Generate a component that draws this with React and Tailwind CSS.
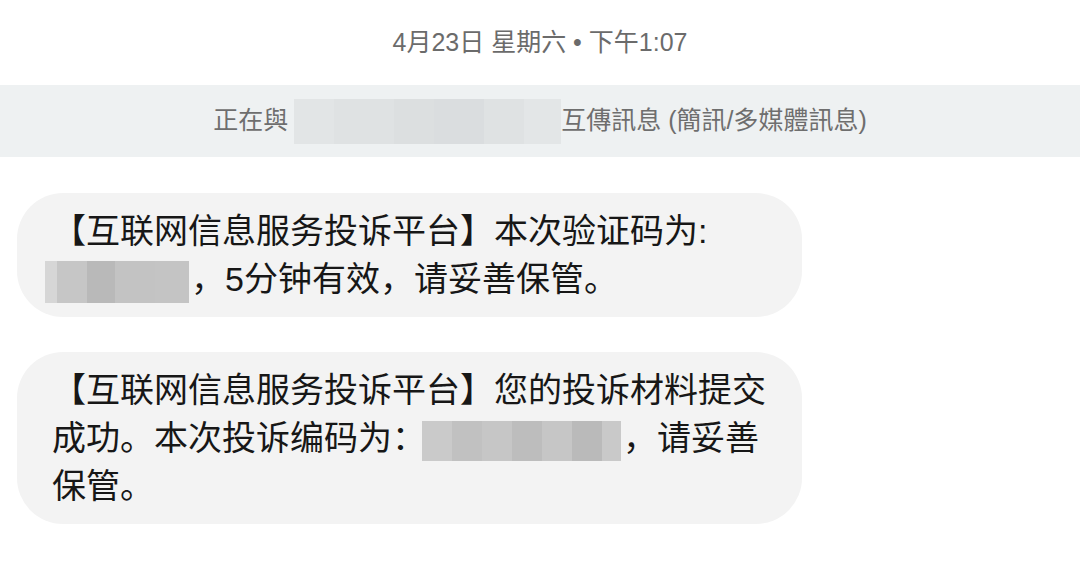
const sc = { fontFamily: '"Liberation Sans", "Noto Sans CJK SC", sans-serif' };
const tc = { fontFamily: '"Liberation Sans", "Noto Sans CJK TC", sans-serif' };

function Blur({ cells, className }) {
  return (
    <span className={`inline-flex align-middle overflow-hidden ${className}`}>
      {cells.map((c, i) => (
        <span key={i} className={`h-full ${c}`} />
      ))}
    </span>
  );
}

function Bubble({ children }) {
  return (
    <div className="w-[785px] rounded-[46px] bg-[#f3f3f3] px-[35px] py-[14px] text-[34px] leading-[48px] text-[#171717]">
      {children}
    </div>
  );
}

export default function App() {
  return (
    <div className="w-[1080px] h-[564px] bg-white overflow-hidden" style={sc}>
      <div className="h-[85px] flex items-center justify-center text-[25px] text-[#6b6b6b]">
        4月23日 星期六 • 下午1:07
      </div>

      <div
        className="h-[72px] bg-[#eef1f2] flex items-center justify-center text-[25px] text-[#6e6e6e]"
        style={tc}
      >
        <span>正在與</span>
        <Blur
          className="w-[267px] h-[45px] ml-[6px]"
          cells={[
            "w-[40px] bg-[#e2e5e6]",
            "w-[60px] bg-[#dfe2e3]",
            "w-[40px] bg-[#dcdfe0]",
            "w-[50px] bg-[#dadddf]",
            "w-[40px] bg-[#dfe2e3]",
            "w-[37px] bg-[#e3e6e7]",
          ]}
        />
        <span>互傳訊息 (簡訊/多媒體訊息)</span>
      </div>

      <div className="pl-[17px] pt-[36px] flex flex-col gap-[35px]">
        <Bubble>
          【互联网信息服务投诉平台】本次验证码为:
          <br />
          <Blur
            className="w-[144px] h-[42px] -ml-[7px] mr-[2px]"
            cells={[
              "w-[12px] bg-[#d6d6d6]",
              "w-[30px] bg-[#c6c6c6]",
              "w-[28px] bg-[#b9b9b9]",
              "w-[40px] bg-[#c3c3c3]",
              "w-[34px] bg-[#c4c4c4]",
            ]}
          />
          ，5分钟有效，请妥善保管。
        </Bubble>

        <Bubble>
          【互联网信息服务投诉平台】您的投诉材料提交成功。本次投诉编码为：
          <Blur
            className="w-[199px] h-[40px] -ml-[4px] mr-[2px]"
            cells={[
              "w-[30px] bg-[#cacaca]",
              "w-[30px] bg-[#c1c1c1]",
              "w-[30px] bg-[#c6c6c6]",
              "w-[30px] bg-[#bdbdbd]",
              "w-[30px] bg-[#c6c6c6]",
              "w-[30px] bg-[#bababa]",
              "w-[19px] bg-[#c9c9c9]",
            ]}
          />
          ，请妥善保管。
        </Bubble>
      </div>
    </div>
  );
}
